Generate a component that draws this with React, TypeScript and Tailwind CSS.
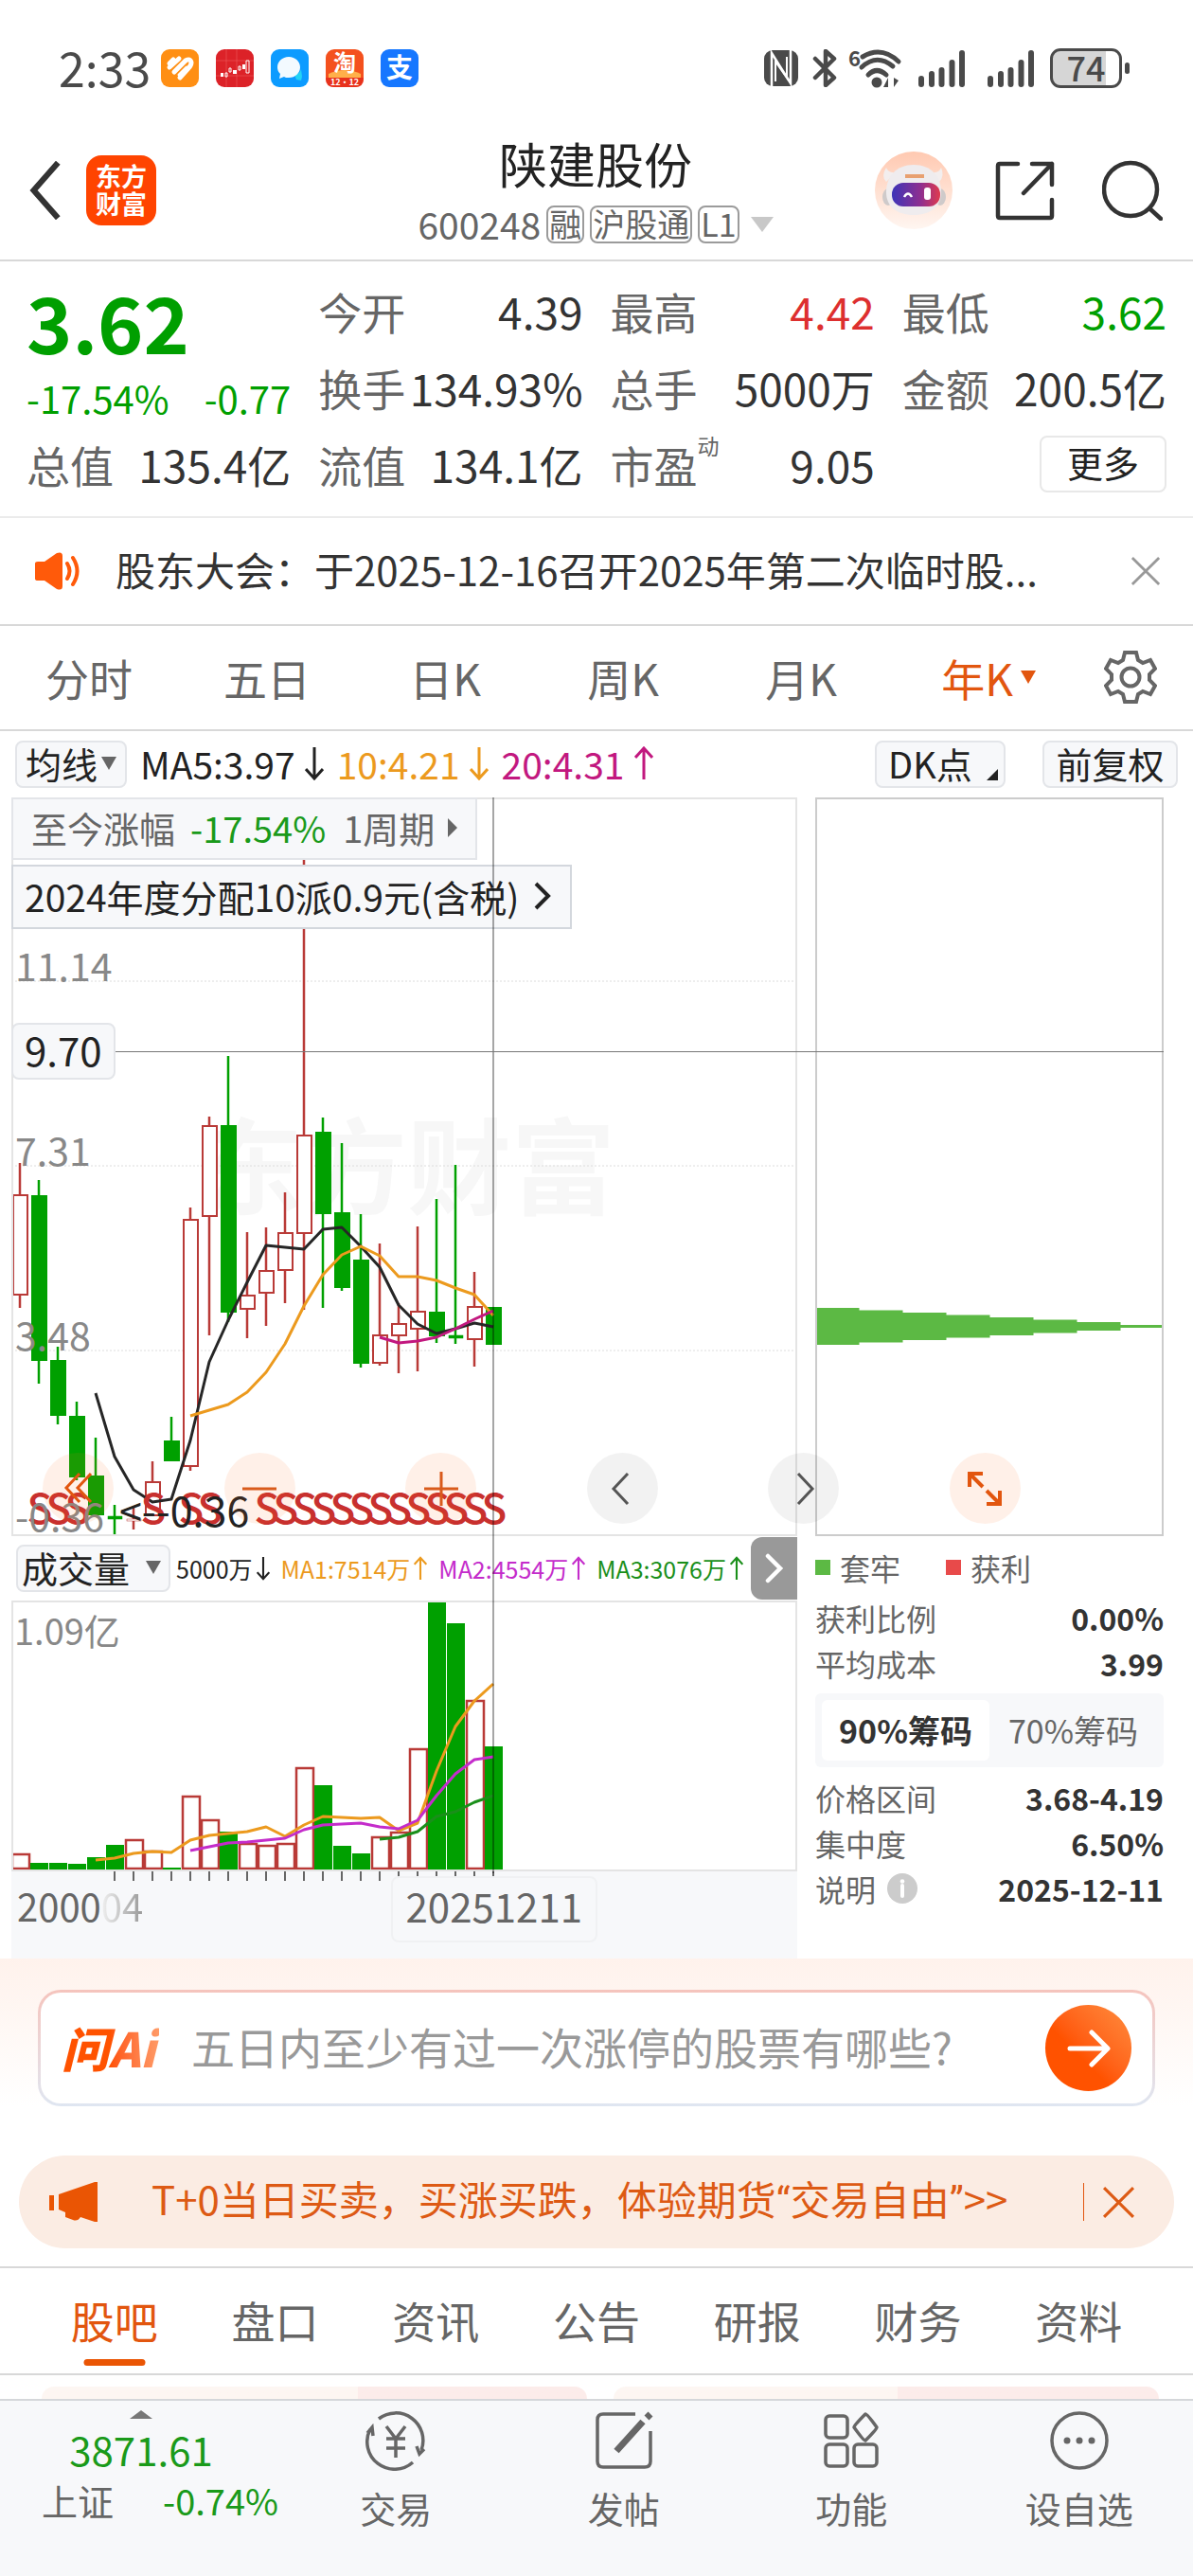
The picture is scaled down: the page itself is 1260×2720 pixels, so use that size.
import { useState } from 'react'
import type { ReactNode } from 'react'

type Bar = { up: boolean; high: number; top: number; bottom: number; low: number }

const STEP = 20
const FIRST_X = 9

// [direction, high, body top, body bottom, low] in chart units
const RAW_CANDLES: [string, number, number, number, number][] = [
  ['r', 386, 420, 525, 539],
  ['g', 404, 421, 594, 619],
  ['g', 580, 595, 652, 662],
  ['g', 638, 654, 717, 721],
  ['g', 676, 717, 757, 757],
  ['g', 747, 759, 762, 779],
  ['r', 748, 762, 764, 773],
  ['r', 701, 723, 758, 758],
  ['g', 654, 680, 700, 700],
  ['r', 433, 446, 706, 711],
  ['r', 337, 347, 442, 568],
  ['g', 273, 347, 543, 554],
  ['r', 459, 526, 540, 571],
  ['r', 454, 500, 523, 558],
  ['r', 417, 460, 499, 534],
  ['r', 40, 357, 460, 541],
  ['g', 338, 354, 439, 539],
  ['g', 365, 439, 517, 521],
  ['g', 440, 489, 597, 602],
  ['r', 471, 568, 597, 600],
  ['r', 534, 556, 568, 608],
  ['r', 453, 543, 561, 606],
  ['g', 424, 544, 568, 576],
  ['g', 388, 568, 571, 577],
  ['r', 501, 538, 572, 601],
  ['g', 539, 539, 577, 577],
]

const CANDLES: Bar[] = RAW_CANDLES.map(([dir, high, top, bottom, low]) => ({
  up: dir === 'r',
  high,
  top,
  bottom,
  low,
}))

const PRICE_MA = [
  { color: '#262626', start: 4, values: [629, 696, 731, 744, 741, 679, 596, 552, 512, 473, 475, 477, 456, 454, 474, 496, 536, 556, 566, 561, 555, 559] },
  { color: '#ec9a1e', start: 9, values: [653, 647, 641, 628, 607, 577, 537, 504, 483, 474, 484, 506, 506, 510, 518, 525, 547] },
  { color: '#c2187f', start: 19, values: [570, 576, 574, 570, 561, 551, 542] },
]

const VOLUMES = [17, 7, 7, 6, 13, 26, 32, 20, 2, 78, 53, 40, 28, 26, 28, 108, 89, 25, 17, 35, 40, 128, 284, 260, 179, 130]

const VOLUME_MA = [
  { color: '#1a8f1a', start: 19, values: [252, 250, 244, 228, 223, 213, 206] },
  { color: '#ec9a1e', start: 4, values: [274, 272, 267, 265, 266, 253, 248, 246, 244, 239, 249, 237, 228, 229, 230, 229, 243, 235, 180, 133, 106, 88] },
  { color: '#c42ccb', start: 9, values: [264, 260, 256, 255, 253, 251, 242, 237, 236, 235, 239, 241, 232, 206, 183, 168, 165] },
]

const SELL_MARKS = [1, 2, 3, 7, 9, 10, 13, 14, 15, 16, 17, 18, 19, 20, 21, 22, 23, 24, 25]

const GRID = [
  { label: '11.14', y: 194 },
  { label: '7.31', y: 389 },
  { label: '3.48', y: 584 },
]

const PERIODS = ['分时', '五日', '日K', '周K', '月K', '年K']
const SECTIONS = ['股吧', '盘口', '资讯', '公告', '研报', '财务', '资料']

const xAt = (i: number) => FIRST_X + i * STEP

function points(start: number, values: number[]) {
  return values.map((y, i) => `${xAt(start + i)},${y}`).join(' ')
}

function Arrow({ up = false, className = 'h-9 w-5' }: { up?: boolean; className?: string }) {
  return (
    <svg viewBox="0 0 20 36" className={`shrink-0 ${className}`} fill="none" stroke="currentColor" strokeWidth="3" aria-hidden="true">
      {up ? <path d="M10 35V2M1 12l9-10 9 10" /> : <path d="M10 1v33M1 24l9 10 9-10" />}
    </svg>
  )
}

function Triangle({ className }: { className: string }) {
  return (
    <svg viewBox="0 0 16 14" preserveAspectRatio="none" className={`shrink-0 ${className}`} fill="currentColor" aria-hidden="true">
      <path d="M0 0h16L8 14z" />
    </svg>
  )
}

function Close({ className }: { className: string }) {
  return (
    <svg viewBox="0 0 34 34" className={className} fill="none" stroke="currentColor" strokeWidth="3" aria-hidden="true">
      <path d="M2 2l30 30M32 2L2 32" />
    </svg>
  )
}

function AppIcons() {
  return (
    <div className="flex gap-[18px]" aria-hidden="true">
      <svg viewBox="0 0 40 40" className="size-10">
        <rect width="40" height="40" rx="9" fill="#ff8f14" />
        <g fill="none" stroke="#fff" strokeWidth="5" strokeLinecap="round">
          <path d="M9 15l4-4M9 19l10-9M14 24l12-12q5-3 6 2 0 3-3 6L20 30" />
          <path d="M19 27l8-8" strokeWidth="3" />
        </g>
      </svg>
      <svg viewBox="0 0 40 40" className="size-10">
        <rect width="40" height="40" rx="9" fill="#dc2228" />
        <path d="M11 0v40M22 0v40M0 12h40M0 28h40" stroke="#ee5a5c" strokeWidth=".6" />
        <g fill="#fff">
          <path d="M5 25h3v4H5zM18 22h4v4h-4zM28 16h3v5h-3z" />
          <path d="M10 25h2v4h-2zM14 20h2v4h-2zM24 18h2v4h-2zM32 12h3v13h-3z" fill="none" stroke="#fff" />
        </g>
      </svg>
      <svg viewBox="0 0 40 40" className="size-10">
        <rect width="40" height="40" rx="9" fill="#0c9bff" />
        <path d="M25 27q6-1 7-6l1 8-1 4-5-1z" fill="#22d3f5" />
        <path d="M19 8c7 0 12 5 12 11s-5 11-12 11c-2 0-4 0-5-1l-5 2 1-5c-2-2-3-4-3-7C7 13 12 8 19 8z" fill="#f3faff" />
      </svg>
      <svg viewBox="0 0 40 40" className="size-10 overflow-visible">
        <rect width="40" height="40" rx="9" fill="#f4511e" />
        <path d="M3 26q17-8 34 0v4H3z" fill="#ffb04a" />
        <path d="M0 30h40v1q0 9-9 9H9q-9 0-9-9z" fill="#e8321c" />
        <text x="20" y="23" textAnchor="middle" fontSize="24" fontWeight="700" fill="#fff">淘</text>
        <text x="20" y="38" textAnchor="middle" fontSize="9" fontWeight="700" fill="#fff">12·12</text>
      </svg>
      <svg viewBox="0 0 40 40" className="size-10 overflow-visible">
        <rect width="40" height="40" rx="9" fill="#1677ff" />
        <text x="20" y="30" textAnchor="middle" fontSize="28" fontWeight="700" fill="#fff">支</text>
      </svg>
    </div>
  )
}

function Signal() {
  return (
    <svg viewBox="0 0 50 40" className="h-10 w-[50px]" stroke="#4a4a4a" strokeWidth="6" strokeLinecap="round" aria-hidden="true">
      <path d="M3 31v6M14 26v11M24.500 22v15M35.500 14v23M46 4v33" />
    </svg>
  )
}

function StatusBar() {
  return (
    <div className="flex h-[136px] items-center justify-between pt-2 pr-[67px] pl-[62px] text-[#4a4a4a]">
      <div className="flex items-center gap-[11px]">
        <span className="pb-1 text-[50px] leading-none">2:33</span>
        <AppIcons />
      </div>
      <div className="flex items-center">
        <svg viewBox="0 0 36 38" className="mr-[15px] h-[38px] w-9" aria-hidden="true">
          <rect width="36" height="38" rx="9" fill="#4a4a4a" />
          <path d="M8 38V3l20 32V0" fill="none" stroke="#fff" strokeWidth="2.500" />
          <path d="M12 33V12l12 17V7" fill="none" stroke="#fff" strokeWidth="2" />
        </svg>
        <svg viewBox="0 0 26 40" className="mr-3 h-10 w-[26px]" fill="none" stroke="#4a4a4a" strokeWidth="4.500" strokeLinejoin="round" strokeLinecap="round" aria-hidden="true">
          <path d="M3 10l20 20-9 8V2l9 8L3 30" />
        </svg>
        <svg viewBox="0 0 56 42" className="mr-[18px] h-[42px] w-14 overflow-visible" fill="none" stroke="#4a4a4a" strokeWidth="5" strokeLinecap="round" aria-hidden="true">
          <text x="0" y="19" fontSize="22" fontWeight="700" fill="#4a4a4a" stroke="none">6</text>
          <path d="M15 9q20-12 38 5M14 20q16-15 33-1M21 28q9-9 19 0" />
          <circle cx="30" cy="36" r="5.500" fill="#4a4a4a" stroke="none" />
          <path d="M42 31v10h-5zM46 31v10M48 31l5 3-5 7z" fill="#4a4a4a" strokeWidth="0" />
        </svg>
        <Signal />
        <div className="w-[23px]" />
        <Signal />
        <div className="ml-4 flex h-[42px] w-[76px] items-center justify-center rounded-[11px] border-[3px] border-[#4a4a4a] bg-linear-to-r from-[#d6d6d6] from-80% to-white to-80% pb-1 text-[36px] leading-none font-medium">
          74
        </div>
        <div className="ml-[3px] h-3 w-[5px] rounded-full bg-[#4a4a4a]" />
      </div>
    </div>
  )
}

function Tag({ children }: { children: ReactNode }) {
  return (
    <span className="flex h-10 items-center rounded-lg border-2 border-[#9b9b9b] px-px pb-0.5 text-[34px] leading-none">
      {children}
    </span>
  )
}

function Header() {
  return (
    <header className="grid h-[140px] grid-cols-[1fr_auto_1fr] items-center border-b-2 border-[#d8d8d8] pr-8 pb-2 pl-[30px]">
      <div className="flex items-center gap-[25px]">
        <button type="button" aria-label="返回">
          <svg viewBox="0 0 36 70" className="h-[62px] w-9" fill="none" stroke="#333" strokeWidth="7" aria-hidden="true">
            <path d="M33 2L4 35l29 33" />
          </svg>
        </button>
        <svg viewBox="0 0 74 74" className="size-[74px]" role="img" aria-label="东方财富">
          <rect width="74" height="74" rx="16" fill="#ff4400" />
          <g fontSize="27" fontWeight="700" fill="#fff" textAnchor="middle">
            <text x="37" y="33">东方</text>
            <text x="37" y="62">财富</text>
          </g>
        </svg>
      </div>
      <div className="flex flex-col items-center gap-3 pb-1">
        <h1 className="text-[51px] leading-[64px] text-[#222]">陕建股份</h1>
        <button type="button" className="flex items-center gap-1.5 text-[#666]">
          <span className="pb-0.5 text-[39px] leading-10">600248</span>
          <Tag>融</Tag>
          <Tag>沪股通</Tag>
          <Tag>L1</Tag>
          <Triangle className="ml-1.5 h-4 w-6 text-[#c8c8c8]" />
        </button>
      </div>
      <div className="flex items-center justify-end">
        <button type="button" aria-label="智能助手" className="mr-[45px]">
          <svg viewBox="0 0 82 82" className="size-[82px]" aria-hidden="true">
            <defs>
              <linearGradient id="botBg" x1="0" y1="0" x2="0" y2="1">
                <stop offset="0" stopColor="#ffc9b1" />
                <stop offset="1" stopColor="#fff6f1" />
              </linearGradient>
              <linearGradient id="visor">
                <stop offset="0" stopColor="#3d34b8" />
                <stop offset=".6" stopColor="#8f2f8f" />
                <stop offset="1" stopColor="#e03a4e" />
              </linearGradient>
            </defs>
            <circle cx="41" cy="41" r="41" fill="url(#botBg)" />
            <path d="M12 32q-6-6 0-15 2 6 10 5zM68 32q6-6 2-15-2 6-10 5z" fill="#f3eeee" />
            <ellipse cx="14" cy="48" rx="6" ry="9" fill="#cfcaca" />
            <ellipse cx="69" cy="48" rx="6" ry="9" fill="#cfcaca" />
            <path d="M41 14c18 0 29 12 29 29 0 15-11 24-29 24S12 58 12 43c0-17 11-29 29-29z" fill="#efecee" />
            <rect x="18" y="33" width="51" height="25" rx="12" fill="url(#visor)" />
            <path d="M31 48q4-7 8 0" fill="none" stroke="#fff" strokeWidth="2.500" />
            <rect x="52" y="38" width="7" height="13" rx="3" fill="#fff" />
            <path d="M32 26h20" stroke="#e8a070" strokeWidth="4" />
          </svg>
        </button>
        <button type="button" aria-label="分享" className="mr-[50px]">
          <svg viewBox="0 0 63 63" className="size-[63px]" fill="none" stroke="#333" strokeWidth="4.500" strokeLinejoin="round" strokeLinecap="round" aria-hidden="true">
            <path d="M24 3H5q-2 0-2 2v53q0 2 2 2h53q2 0 2-2V41M39 3h21v22M60 3L30 34" />
          </svg>
        </button>
        <button type="button" aria-label="搜索">
          <svg viewBox="0 0 64 64" className="size-16" fill="none" stroke="#333" strokeWidth="4.500" strokeLinecap="round" aria-hidden="true">
            <circle cx="30" cy="31" r="28" />
            <path d="M50 51l12 11" />
          </svg>
        </button>
      </div>
    </header>
  )
}

function Stat({ label, value, sup, color = 'text-[#333]' }: { label: string; value: string; sup?: string; color?: string }) {
  return (
    <div className="flex h-[81px] items-center justify-between text-[46px] leading-none">
      <span className="relative text-[#666]">
        {label}
        {sup && <sup className="absolute -top-2 left-full text-[23px] leading-none">{sup}</sup>}
      </span>
      <span className={color}>{value}</span>
    </div>
  )
}

function Quote() {
  return (
    <section className="grid grid-cols-4 gap-x-[29px] px-7 pt-[11px] pb-[15px]" aria-label="行情">
      <div className="row-span-2 text-[#009f00]">
        <div className="h-[104px] text-[82px] leading-[104px] font-bold">3.62</div>
        <div className="flex h-[58px] items-center justify-between text-[40px] leading-none">
          <span>-17.54%</span>
          <span>-0.77</span>
        </div>
      </div>
      <Stat label="今开" value="4.39" />
      <Stat label="最高" value="4.42" color="text-[#dd2f2f]" />
      <Stat label="最低" value="3.62" color="text-[#009f00]" />
      <Stat label="换手" value="134.93%" />
      <Stat label="总手" value="5000万" />
      <Stat label="金额" value="200.5亿" />
      <Stat label="总值" value="135.4亿" />
      <Stat label="流值" value="134.1亿" />
      <Stat label="市盈" value="9.05" sup="动" />
      <div className="flex items-center justify-end">
        <button type="button" className="h-[60px] w-[134px] rounded-lg border-2 border-[#e8e8e8] pb-1 text-[38px] leading-none text-[#222]">
          更多
        </button>
      </div>
    </section>
  )
}

function Notice() {
  return (
    <div className="flex h-[114px] items-center border-t-2 border-[#ebebeb] pr-[34px] pl-9 text-[#333]">
      <svg viewBox="0 0 50 40" className="mr-9 h-10 w-[50px] shrink-0" aria-hidden="true">
        <path d="M1 12q0-2 3-2h7L24 1q6-2 6 3v32q0 5-6 3L11 30H4q-3 0-3-2z" fill="#ff5a0a" />
        <path d="M35 12q5 8 0 16M41 6q9 14 0 28" fill="none" stroke="#ff5a0a" strokeWidth="4" strokeLinecap="round" />
      </svg>
      <a href="#notice" className="flex-1 pb-1 text-[42px] leading-none">
        股东大会：于2025-12-16召开2025年第二次临时股...
      </a>
      <button type="button" aria-label="关闭" className="text-[#999]">
        <Close className="size-8" />
      </button>
    </div>
  )
}

function PeriodTabs() {
  const [period, setPeriod] = useState('年K')
  return (
    <nav className="flex h-[113px] items-center border-y-2 border-[#d8d8d8] pb-0.5 text-[46px] leading-none text-[#666]">
      {PERIODS.map((p) => (
        <button
          key={p}
          type="button"
          onClick={() => setPeriod(p)}
          aria-pressed={p === period}
          className={`flex flex-1 justify-center ${p === period ? 'text-[#e2560f]' : ''}`}
        >
          <span className={`flex items-center gap-2 ${p === '年K' ? 'pl-5' : ''}`}>
            {p}
            {p === '年K' && <Triangle className="h-3.5 w-4" />}
          </span>
        </button>
      ))}
      <button type="button" aria-label="设置" className="flex w-[132px] justify-center">
        <svg viewBox="0 0 56 58" className="h-[58px] w-14" fill="none" stroke="#666" strokeWidth="4" strokeLinejoin="miter" aria-hidden="true">
          <path d="M22 3h12l2 8 5 3 8-3 5 9-6 6v6l6 6-5 9-8-3-5 3-2 8H22l-2-8-5-3-8 3-5-9 6-6v-6l-6-6 5-9 8 3 5-3z" />
          <circle cx="28" cy="29" r="9.500" />
        </svg>
      </button>
    </nav>
  )
}

function MovingAverages() {
  return (
    <div className="flex h-[70px] items-center px-4 text-[38px] leading-none text-[#222]">
      <button type="button" className="flex h-[50px] w-[118px] items-center justify-center gap-1 rounded-lg border-2 border-[#e3e5e9] bg-[#f7f8fa] pb-0.5">
        均线
        <Triangle className="h-3.5 w-4 text-[#666]" />
      </button>
      <div className="ml-3.5 flex items-center gap-3.5 pb-0.5 text-[39px]">
        <span className="flex items-center gap-2.5">
          MA5:3.97
          <Arrow />
        </span>
        <span className="flex items-center gap-2.5 text-[#ec9a1e]">
          10:4.21
          <Arrow />
        </span>
        <span className="flex items-center gap-2.5 text-[#c2187f]">
          20:4.31
          <Arrow up />
        </span>
      </div>
      <button type="button" className="relative ml-auto h-[50px] w-[138px] rounded-lg border-2 border-[#e3e5e9] bg-[#f7f8fa] pb-0.5 pl-3 text-left">
        DK点
        <svg viewBox="0 0 12 12" className="absolute right-1.5 bottom-1.5 size-3" aria-hidden="true">
          <path d="M12 0v12H0z" fill="#222" />
        </svg>
      </button>
      <button type="button" className="ml-[39px] h-[50px] w-[143px] rounded-lg border-2 border-[#e3e5e9] bg-[#f7f8fa] pb-0.5">
        前复权
      </button>
    </div>
  )
}

function PriceChart() {
  return (
    <svg viewBox="2 2 826 776" preserveAspectRatio="xMinYMin meet" className="h-[776px] w-full" role="img" aria-label="年K线图">
      <text x="198" y="432" fontSize="110" fontWeight="700" fill="#f7f7f7">东方财富</text>
      {GRID.map((g) => (
        <line key={g.label} x1="0" x2="830" y1={g.y} y2={g.y} stroke="#dcdcdc" strokeWidth="1" strokeDasharray="2 2" />
      ))}
      {CANDLES.map((c, i) => {
        const x = xAt(i)
        const color = c.up ? '#b93a37' : '#00a000'
        return (
          <g key={i} stroke={color} fill={c.up ? '#fff' : color}>
            <line x1={x} x2={x} y1={c.high} y2={c.low} strokeWidth="2.500" />
            <rect x={x - 7} y={c.top} width="15" height={c.bottom - c.top} strokeWidth={c.bottom - c.top < 6 ? 0.5 : 2} />
          </g>
        )
      })}
      {PRICE_MA.map((m) => (
        <polyline key={m.color} points={points(m.start, m.values)} fill="none" stroke={m.color} strokeWidth="3" strokeLinejoin="round" />
      ))}
      <g fontSize="44" fontWeight="500" fill="#c8302e" textAnchor="middle">
        {SELL_MARKS.map((i) => (
          <text key={i} x={xAt(i) + 1} y="767">S</text>
        ))}
      </g>
      <g fontSize="41" fill="#888">
        {GRID.map((g) => (
          <text key={g.label} x="4" y={g.y}>{g.label}</text>
        ))}
        <text x="4" y="775">-0.36</text>
      </g>
      <text x="114" y="770" fontSize="43" fill="#222">&lt;--0.36</text>
    </svg>
  )
}

function VolumeChart() {
  return (
    <svg viewBox="2 2 826 282" preserveAspectRatio="xMinYMax meet" className="h-[282px] w-full" role="img" aria-label="成交量图">
      {VOLUMES.map((h, i) => {
        const up = CANDLES[i].up
        return up ? (
          <rect key={i} x={xAt(i) - 8} y={285 - h} width="18" height={Math.max(h - 2, 1)} fill="#fff" stroke="#b93a37" strokeWidth="2.500" />
        ) : (
          <rect key={i} x={xAt(i) - 9} y={284 - h} width="19" height={h} fill="#00a000" />
        )
      })}
      {VOLUME_MA.map((m) => (
        <polyline key={m.color} points={points(m.start, m.values)} fill="none" stroke={m.color} strokeWidth="3" strokeLinejoin="round" />
      ))}
      <text x="3" y="47" fontSize="38" fill="#888">1.09亿</text>
    </svg>
  )
}

function ChartControls() {
  const circle = 'flex size-[75px] items-center justify-center rounded-full'
  return (
    <div className="absolute top-[692px] right-[182px] left-[45px] flex justify-between">
      <button type="button" aria-label="最左" className={`${circle} bg-[#ff6a1a]/10`}>
        <svg viewBox="0 0 32 36" className="h-9 w-8" fill="none" stroke="#e2560f" strokeWidth="3" aria-hidden="true">
          <path d="M17 2L3 17l14 15M29 2L15 17l14 15" />
        </svg>
      </button>
      <button type="button" aria-label="缩小" className={`${circle} bg-[#ff6a1a]/10`}>
        <svg viewBox="0 0 36 36" className="size-9" stroke="#d95b1c" strokeWidth="3" aria-hidden="true">
          <path d="M0 18h36" />
        </svg>
      </button>
      <button type="button" aria-label="放大" className={`${circle} bg-[#ff6a1a]/10`}>
        <svg viewBox="0 0 36 36" className="size-9" stroke="#d95b1c" strokeWidth="3" aria-hidden="true">
          <path d="M0 18h36M18 0v36" />
        </svg>
      </button>
      <button type="button" aria-label="左移" className={`${circle} bg-black/5`}>
        <svg viewBox="0 0 20 34" className="mr-1 h-[34px] w-5" fill="none" stroke="#555" strokeWidth="3" aria-hidden="true">
          <path d="M18 1L3 17l15 16" />
        </svg>
      </button>
      <button type="button" aria-label="右移" className={`${circle} bg-black/5`}>
        <svg viewBox="0 0 20 34" className="ml-1 h-[34px] w-5" fill="none" stroke="#555" strokeWidth="3" aria-hidden="true">
          <path d="M2 1l15 16L2 33" />
        </svg>
      </button>
      <button type="button" aria-label="全屏" className={`${circle} bg-[#ff6a1a]/10`}>
        <svg viewBox="0 0 38 38" className="size-[38px]" fill="none" stroke="#e2560f" strokeWidth="4" aria-hidden="true">
          <path d="M17 3H3v14M3 3l14 14M21 35h14V21M35 35L21 21" />
        </svg>
      </button>
    </div>
  )
}

function VolumeRow() {
  return (
    <div className="flex h-[68px] items-center pl-[5px] text-[25px] leading-none">
      <button type="button" className="mr-1.5 flex h-[50px] w-[163px] items-center justify-between rounded-lg border-2 border-[#e3e5e9] bg-[#f7f8fa] pr-2 pb-0.5 pl-1 text-[38px] text-[#222]">
        成交量
        <Triangle className="h-3.5 w-4 text-[#666]" />
      </button>
      <div className="flex flex-1 items-center justify-between pr-2 whitespace-nowrap">
        <span className="flex items-center gap-1 text-[#222]">
          5000万
          <Arrow className="h-8 w-3.5" />
        </span>
        <span className="flex items-center gap-1 text-[#ec9a1e]">
          MA1:7514万
          <Arrow up className="h-8 w-3.5" />
        </span>
        <span className="flex items-center gap-1 text-[#c42ccb]">
          MA2:4554万
          <Arrow up className="h-8 w-3.5" />
        </span>
        <span className="flex items-center gap-1 text-[#1a8f1a]">
          MA3:3076万
          <Arrow up className="h-8 w-3.5" />
        </span>
      </div>
      <button type="button" aria-label="更多指标" className="flex h-[66px] w-[49px] items-center justify-center rounded-l-xl bg-[#999]">
        <svg viewBox="0 0 20 32" className="h-8 w-5" fill="none" stroke="#fff" strokeWidth="4.500" strokeLinecap="round" aria-hidden="true">
          <path d="M3 3l13 13L3 29" />
        </svg>
      </button>
    </div>
  )
}

function TimeAxis() {
  return (
    <div className="relative flex h-[92px] items-start justify-between bg-[#f7f8fa] text-[40px] leading-none text-[#666]">
      <svg viewBox="0 0 830 10" preserveAspectRatio="xMinYMin meet" className="absolute top-0 left-0 h-[10px] w-full" stroke="#666" strokeWidth="2" aria-hidden="true">
        {VOLUMES.map((_, i) => i >= 5 && <path key={i} d={`M${xAt(i)} 0v10`} />)}
      </svg>
      <span className="pt-4 pl-1.5">
        2000<span className="bg-linear-to-r from-[#f0f0f0] to-[#999] bg-clip-text text-transparent">04</span>
      </span>
      <span className="relative mt-[5px] mr-[211px] flex h-[70px] items-center rounded-lg border-2 border-[#f0f1f3] bg-[#f7f8fa] px-3.5 pb-2 text-[42px]">
        20251211
      </span>
    </div>
  )
}

function Row({ label, value, children }: { label: string; value: string; children?: ReactNode }) {
  return (
    <div className="flex h-12 items-center justify-between text-[32px] leading-none">
      <dt className="flex items-center gap-3 text-[#666]">
        {label}
        {children}
      </dt>
      <dd className="font-bold text-[#333]">{value}</dd>
    </div>
  )
}

function ChipPanel() {
  const [range, setRange] = useState('90%筹码')
  return (
    <aside className="w-[368px] shrink-0">
      <svg viewBox="2 2 364 776" className="h-[780px] w-full border-2 border-[#ccc]" preserveAspectRatio="none" role="img" aria-label="筹码分布">
        <g fill="#5cb944">
          {[19.5, 17, 14.5, 12, 9.5, 7, 4.5, 1.5].map((half, i) => (
            <rect key={i} x={i * 46} y={558.5 - half} width="46.500" height={half * 2} />
          ))}
        </g>
      </svg>
      <div className="flex h-[62px] items-center pt-1 text-[32px] leading-none text-[#666]">
        <span className="mr-2.5 size-4 bg-[#5cb944]" />
        套牢
        <span className="mr-2.5 ml-12 size-4 bg-[#e84a4a]" />
        获利
      </div>
      <dl>
        <Row label="获利比例" value="0.00%" />
        <Row label="平均成本" value="3.99" />
      </dl>
      <div className="my-2 flex h-[78px] rounded-md bg-[#f7f8fa] p-[7px] text-[34px] leading-none">
        {['90%筹码', '70%筹码'].map((r) => (
          <button
            key={r}
            type="button"
            onClick={() => setRange(r)}
            aria-pressed={r === range}
            className={`flex-1 rounded-md ${r === range ? 'bg-white font-bold text-[#333]' : 'text-[#666]'}`}
          >
            {r}
          </button>
        ))}
      </div>
      <dl>
        <Row label="价格区间" value="3.68-4.19" />
        <Row label="集中度" value="6.50%" />
        <Row label="说明" value="2025-12-11">
          <svg viewBox="0 0 32 32" className="size-8" aria-hidden="true">
            <circle cx="16" cy="16" r="16" fill="#ccc" />
            <path d="M16 13v11" stroke="#fff" strokeWidth="4" strokeLinecap="round" />
            <circle cx="16" cy="8.500" r="2.300" fill="#fff" />
          </svg>
        </Row>
      </dl>
    </aside>
  )
}

function Charts() {
  return (
    <section className="relative flex gap-[19px] pr-[31px] pl-3" aria-label="图表">
      <div className="relative min-w-0 flex-1">
        <div className="border-2 border-[#e4e4e4]">
          <PriceChart />
        </div>
        <VolumeRow />
        <div className="border-2 border-[#e4e4e4]">
          <VolumeChart />
        </div>
        <TimeAxis />
        <button type="button" className="absolute top-0 left-0 flex h-[66px] items-center border-2 border-[#e3e5e9] bg-[#f7f8fa] pr-[19px] pb-0.5 pl-[19px] text-[38px] leading-none text-[#666]">
          至今涨幅
          <span className="mr-[18px] ml-4 text-[#1a9a1a]">-17.54%</span>
          1周期
          <svg viewBox="0 0 10 20" className="ml-3.5 h-5 w-2.5" fill="#666" aria-hidden="true">
            <path d="M0 0v20l10-10z" />
          </svg>
        </button>
        <button type="button" className="absolute top-[71px] left-0 flex h-[68px] items-center border-2 border-[#d3d7dd] bg-[#f7f8fa] pr-5 pb-0.5 pl-3 text-[39px] leading-none text-[#222]">
          2024年度分配10派0.9元(含税)
          <svg viewBox="0 0 18 30" className="ml-4 h-[30px] w-[18px]" fill="none" stroke="#222" strokeWidth="4" aria-hidden="true">
            <path d="M2 2l13 13L2 28" />
          </svg>
        </button>
        <span className="absolute top-[238px] left-0 z-10 flex h-[60px] items-center rounded-lg border-2 border-[#e3e5e9] bg-[#f7f8fa] px-3 pb-1 text-[42px] leading-none text-[#222]">
          9.70
        </span>
        <div className="absolute top-0 left-[508px] h-[1136px] w-0.5 bg-black/35" />
      </div>
      <ChipPanel />
      <div className="absolute top-[268px] right-[31px] left-3 h-px bg-[#777]" />
      <ChartControls />
    </section>
  )
}

function AskAi() {
  return (
    <section className="bg-linear-to-b from-[#fff2ec] to-white to-75% px-10 pt-[33px] pb-[52px]">
      <form className="rounded-3xl bg-linear-to-b from-[#f5c4bd] to-[#dfe6f1] p-[3px]" onSubmit={(e) => e.preventDefault()}>
        <div className="flex h-[117px] items-center rounded-[21px] bg-white px-[22px]">
          <span className="bg-linear-to-r from-[#ff5200] from-50% to-[#ff9a66] bg-clip-text pr-1 pb-1 text-[50px] leading-[60px] font-black text-transparent italic">
            问Ai
          </span>
          <input
            type="text"
            aria-label="问Ai"
            placeholder="五日内至少有过一次涨停的股票有哪些?"
            className="ml-[34px] min-w-0 flex-1 pb-1.5 text-[46px] leading-[60px] outline-none placeholder:text-[#999]"
          />
          <button type="submit" aria-label="发送" className="flex size-[91px] items-center justify-center rounded-full bg-linear-to-bl from-[#ff8c3c] to-[#ff5200] to-60%">
            <svg viewBox="0 0 46 40" className="h-10 w-[46px]" fill="none" stroke="#fff" strokeWidth="5" strokeLinecap="round" strokeLinejoin="round" aria-hidden="true">
              <path d="M3 20h39M26 3l17 17-17 17" />
            </svg>
          </button>
        </div>
      </form>
    </section>
  )
}

function Banner() {
  return (
    <div className="mx-5 flex h-[98px] items-center rounded-full bg-[#fbece3] pr-[41px] pl-8 text-[#dd5a14]">
      <svg viewBox="0 0 52 42" className="h-[42px] w-[52px] shrink-0" fill="#ea5504" aria-hidden="true">
        <path d="M0 14h5v16H0zM10 13L48 0h3v42h-3l-15-5q-3 5-8 3l-8-3v-5l-7-3z" />
      </svg>
      <a href="#futures" className="ml-[56px] flex-1 pb-1 text-[42px] leading-none whitespace-nowrap">
        T+0当日买卖，买涨买跌，体验期货<span className="font-['Roboto']">“</span>交易自由
        <span className="font-['Roboto']">”</span>&gt;&gt;
      </a>
      <span className="mr-[19px] h-10 w-px bg-[#e2560f]" />
      <button type="button" aria-label="关闭">
        <Close className="size-[35px]" />
      </button>
    </div>
  )
}

function SectionTabs() {
  const [active, setActive] = useState('股吧')
  return (
    <nav className="mt-[19px] flex h-[115px] border-y-2 border-[#d8d8d8] px-9 text-[46px] leading-none text-[#666]">
      {SECTIONS.map((s) => (
        <button
          key={s}
          type="button"
          onClick={() => setActive(s)}
          aria-pressed={s === active}
          className={`relative flex-1 pb-1 ${s === active ? 'text-[#e2560f]' : ''}`}
        >
          {s}
          {s === active && <span className="absolute bottom-2 left-1/2 h-[7px] w-[65px] -translate-x-1/2 rounded-full bg-[#ea5504]" />}
        </button>
      ))}
    </nav>
  )
}

function BottomItem({ label, children }: { label: string; children: ReactNode }) {
  return (
    <button type="button" className="flex flex-1 flex-col items-center pt-2.5 text-[38px] leading-none text-[#666]">
      <svg viewBox="0 0 64 64" className="mb-5 size-16" fill="none" stroke="#666" strokeWidth="3.500" aria-hidden="true">
        {children}
      </svg>
      {label}
    </button>
  )
}

function BottomBar() {
  return (
    <footer className="flex h-[187px] border-t-2 border-[#d5d7da] bg-[#f7f8fa]">
      <button type="button" className="flex w-[298px] flex-col items-center pt-2.5 leading-none text-[#1a9a1a]">
        <svg viewBox="0 0 24 9" className="h-[9px] w-6" fill="#777" aria-hidden="true">
          <path d="M12 0l12 9H0z" />
        </svg>
        <span className="mt-[11px] text-[42px]">3871.61</span>
        <span className="mt-[14px] flex w-full items-center justify-between pr-1 pl-11 text-[38px]">
          <span className="text-[#666]">上证</span>
          <span>-0.74%</span>
        </span>
      </button>
      <BottomItem label="交易">
        <path d="M14 9A29 29 0 0 1 59 42M50 55A29 29 0 0 1 5 20M2 24l5-6 1 9M62 41l-5 5-3-8" />
        <path d="M22 17l10 13 10-13M32 30v20M22 30h20M22 40h20" />
      </BottomItem>
      <BottomItem label="发帖">
        <path d="M44 4H10q-6 0-6 6v44q0 6 6 6h44q6 0 6-6V22" />
        <path d="M24 43L52 12M56 8l4-4" strokeWidth="7" />
      </BottomItem>
      <BottomItem label="功能">
        <rect x="5" y="6" width="23" height="23" rx="4" />
        <rect x="5" y="36" width="23" height="23" rx="4" />
        <rect x="35" y="36" width="24" height="23" rx="4" />
        <path d="M47 4q2 0 12 14 0 2-12 14-2 0-12-14 0-2 12-14z" strokeLinejoin="round" />
      </BottomItem>
      <BottomItem label="设自选">
        <circle cx="32" cy="32" r="29" />
        <g fill="#666" stroke="none">
          <circle cx="19" cy="32" r="3.500" />
          <circle cx="32" cy="32" r="3.500" />
          <circle cx="45" cy="32" r="3.500" />
        </g>
      </BottomItem>
    </footer>
  )
}

export default function App() {
  return (
    <div className="bg-white font-['Noto_Sans_CJK_SC',sans-serif]">
      <StatusBar />
      <Header />
      <main>
        <Quote />
        <Notice />
        <PeriodTabs />
        <MovingAverages />
        <Charts />
        <AskAi />
        <Banner />
        <SectionTabs />
        <div className="mt-3 flex gap-7 pr-9 pl-11">
          <div className="h-[13px] flex-1 rounded-t-3xl bg-linear-to-r from-[#fdf6f2] from-58% to-[#fcecea] to-58%" />
          <div className="h-[13px] flex-1 rounded-t-3xl bg-linear-to-r from-[#fdf6f2] from-52% to-[#fcecea] to-52%" />
        </div>
      </main>
      <BottomBar />
    </div>
  )
}
